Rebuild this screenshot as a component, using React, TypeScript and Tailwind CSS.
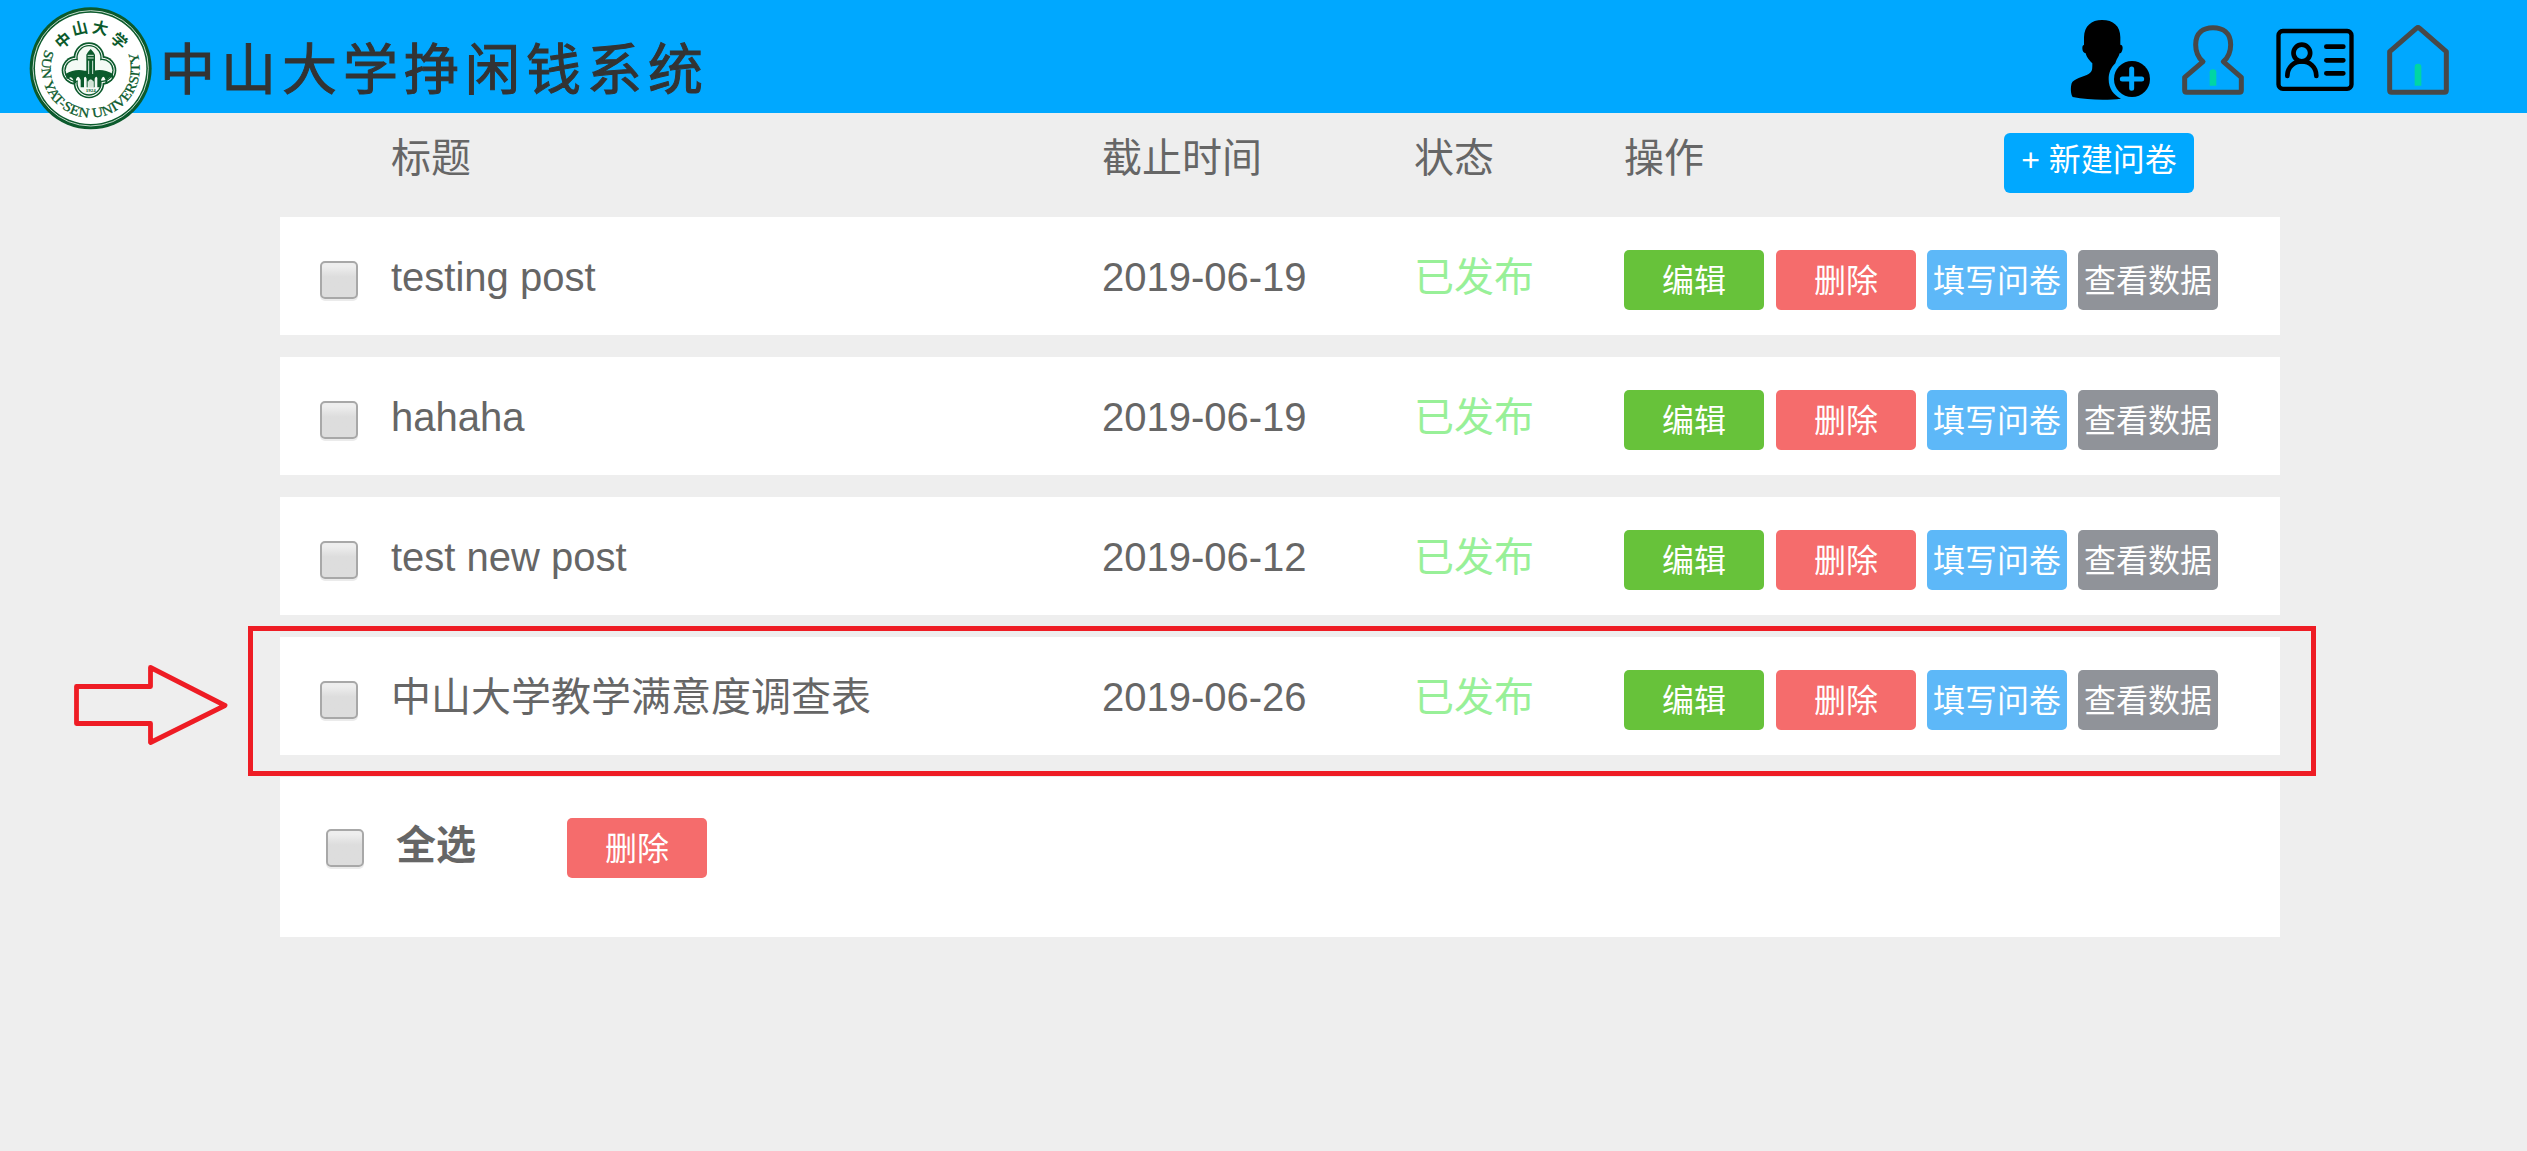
import React from "react";

type Post = { title: string; deadline: string };

const posts: Post[] = [
  { title: "testing post", deadline: "2019-06-19" },
  { title: "hahaha", deadline: "2019-06-19" },
  { title: "test new post", deadline: "2019-06-12" },
  { title: "中山大学教学满意度调查表", deadline: "2019-06-26" },
];

function Lobes({ r, fill }: { r: number; fill: string }) {
  return (
    <g fill={fill}>
      <circle cx="207" cy="173" r={r} />
      <circle cx="207" cy="249" r={r} />
      <circle cx="168" cy="211" r={r - 3} />
      <circle cx="246" cy="211" r={r - 3} />
      <circle cx="207" cy="211" r={r + 10} />
    </g>
  );
}

function Logo() {
  const green = "#0b5a2c";
  return (
    <svg viewBox="0 0 420 405" className="h-[135px] w-[140px] shrink-0">
      <circle cx="212" cy="205" r="183" fill={green} />
      <circle cx="212" cy="205" r="173" fill="none" stroke="#e8f3ea" strokeWidth="2.5" />
      <circle cx="212" cy="205" r="167" fill="#fff" />
      <path id="ring" d="M 77 148 A 147 147 0 1 0 354 167" fill="none" />
      <text fill={green} fontSize="41" fontWeight="400" stroke={green} strokeWidth="0.8" fontFamily="Liberation Serif, serif">
        <textPath href="#ring" textLength="572" lengthAdjust="spacingAndGlyphs">
          SUN YAT-SEN UNIVERSITY
        </textPath>
      </text>
      <g
        fill={green}
        fontSize="47"
        fontWeight="700"
        textAnchor="middle"
        fontFamily="KaiTi, 'Noto Sans CJK SC', sans-serif"
      >
        <text transform="translate(129 121) rotate(-40)" y="17">中</text>
        <text transform="translate(179 85) rotate(-14)" y="17">山</text>
        <text transform="translate(241 84) rotate(12)" y="17">大</text>
        <text transform="translate(297 122) rotate(42)" y="17">学</text>
      </g>
      <Lobes r={46} fill={green} />
      <Lobes r={41} fill="#fff" />
      <Lobes r={38} fill={green} />
      <Lobes r={34} fill="#f4faf5" />
      <path
        d="M136 222 Q165 205 194 212 H222 Q250 205 279 222 V236 Q268 226 262 240 V250 H256 V238 Q250 222 243 240 V262 H232 V234 Q228 226 224 236 V262 H200 V236 Q196 226 192 234 V262 H182 V240 Q174 222 168 238 V250 H160 V240 Q154 226 146 236 H140Z"
        fill={green}
      />
      <path d="M199 226 V164 L204 156 L212 147 L220 156 L225 164 V226Z" fill={green} />
      <path d="M203 166 H221 M203 174 H221" stroke="#d9ebdd" strokeWidth="3" />
      <path d="M206 182 V222 M218 182 V222" stroke="#d9ebdd" strokeWidth="3" />
      <path d="M204 262 V245 Q212 234 220 245 V262Z" stroke="#fff" strokeWidth="2" fill="#cfe3d4" />
      <text x="212" y="277" fontSize="15" fontWeight="700" textAnchor="middle" fill={green} fontFamily="Liberation Serif, serif">
        1924
      </text>
    </svg>
  );
}

function AddUserIcon() {
  return (
    <svg viewBox="60 57 243 246" className="h-[82px] w-[81px]">
      <path
        d="M156 60 C190 60 211 78 211 112 L211 134 C218 134 220 144 216 153 C214 159 211 160 209 160 C206 171 200 176 198 184 L196 190 C182 203 176 220 176 238 C176 264 190 286 213 296 C170 301 115 300 68 291 C62 284 61 262 65 250 C69 236 100 231 117 221 C127 215 127 208 127 190 C119 181 111 175 107 160 C101 160 97 153 97 145 C97 138 99 135 102 135 L102 112 C103 78 124 60 156 60Z"
        fill="#000"
      />
      <circle cx="246" cy="237" r="54" fill="#000" />
      <path d="M245 207 V265 M217 237 H275" stroke="#00a8ff" strokeWidth="15" strokeLinecap="round" />
    </svg>
  );
}

function UserIcon() {
  return (
    <svg viewBox="393 72 192 216" className="h-[72px] w-[64px]">
      <path
        d="M489 83 C460 83 437 98 437 134 C437 157 445 173 459 185 L404 232 V271 Q404 277 410 277 H568 Q574 277 574 271 V232 L520 185 C534 173 542 157 542 134 C542 98 518 83 489 83Z"
        fill="none"
        stroke="#484848"
        strokeWidth="15"
        strokeLinejoin="round"
      />
      <path d="M479 257 V217 Q479 208 489 208 Q499 208 499 217 V257Z" fill="#00d6a3" />
    </svg>
  );
}

function CardIcon() {
  return (
    <svg viewBox="675 84 240 192" className="h-[64px] w-[80px]">
      <g fill="none" stroke="#000" strokeWidth="13" strokeLinecap="round">
        <rect x="685.5" y="93" width="219" height="173.500" rx="13" />
        <circle cx="755.500" cy="159" r="25" strokeWidth="14" />
        <path d="M712 228 C712 200 733 184 755.500 184 C778 184 799 200 799 228" strokeWidth="14" />
        <path d="M829 140 H880 M829 181 H880 M829 220 H880" strokeWidth="14" />
      </g>
    </svg>
  );
}

function HomeIcon() {
  return (
    <svg viewBox="1008 72 192 216" className="h-[72px] w-[64px]">
      <path
        d="M1099 85 Q1104 81 1109 85 L1189 155 V271 Q1189 277 1183 277 H1025 Q1019 277 1019 271 V155Z"
        fill="none"
        stroke="#484848"
        strokeWidth="15"
        strokeLinejoin="round"
      />
      <path d="M1094 257 V200 Q1094 191 1104 191 Q1114 191 1114 200 V257Z" fill="#00d6a3" />
    </svg>
  );
}

function Checkbox() {
  return (
    <span
      role="checkbox"
      aria-checked={false}
      className="block size-[38px] shrink-0 rounded-[5px] border-2 border-[#a8a8a8] bg-linear-to-b from-[#eeeeee] from-10% to-[#dddddd] to-40% shadow-[0_2px_0_#ebebeb]"
    />
  );
}

function ActionButton({ color, children }: { color: string; children: React.ReactNode }) {
  return (
    <button
      className={`flex h-[60px] w-[140px] shrink-0 items-center justify-center rounded-[5px] pt-px text-[32px] leading-[60px] whitespace-nowrap text-white ${color}`}
    >
      {children}
    </button>
  );
}

function Row({ post }: { post: Post }) {
  return (
    <div className="grid h-[118px] grid-cols-[111px_711px_312px_210px_1fr] bg-white leading-[120px]">
      <div className="pt-[44px] pl-[40px]">
        <Checkbox />
      </div>
      <div>{post.title}</div>
      <div>{post.deadline}</div>
      <div className="text-[#98f098]">已发布</div>
      <div className="flex gap-[11px] pt-[33px]">
        <ActionButton color="mr-px bg-[#67c23a]">编辑</ActionButton>
        <ActionButton color="bg-[#f56c6c]">删除</ActionButton>
        <ActionButton color="bg-[#5db8f8]">填写问卷</ActionButton>
        <ActionButton color="bg-[#909399]">查看数据</ActionButton>
      </div>
    </div>
  );
}

export default function App() {
  return (
    <div className="relative min-h-[1151px] w-[2527px] overflow-hidden bg-[#eeeeee] font-['Liberation_Sans','Noto_Sans_CJK_SC',sans-serif] text-[40px] text-[#666666]">
      <header className="flex h-[113px] items-start bg-[#00a8ff] pr-[77px] pl-5">
        <Logo />
        <h1 className="mt-[17px] font-['KaiTi','STKaiti','Noto_Sans_CJK_SC',serif] text-[55px] leading-[96px] font-normal tracking-[6px] whitespace-nowrap text-[#333333] [-webkit-text-stroke:1px_#333333]">
          中山大学挣闲钱系统
        </h1>
        <nav className="mt-[19px] ml-auto flex h-[82px] items-center">
          <AddUserIcon />
          <div className="ml-[30px]">
            <UserIcon />
          </div>
          <div className="ml-[30px]">
            <CardIcon />
          </div>
          <div className="ml-[31px]">
            <HomeIcon />
          </div>
        </nav>
      </header>

      <main className="mx-[280px] w-[2000px]">
        <div className="grid h-[104px] grid-cols-[111px_711px_312px_210px_380px_190px] leading-[90px]">
          <div />
          <div>标题</div>
          <div>截止时间</div>
          <div>状态</div>
          <div>操作</div>
          <button className="mt-[20px] h-[60px] rounded-[6px] bg-[#00a8ff] pb-[6px] text-[32px] leading-[54px] whitespace-nowrap text-white">
            + 新建问卷
          </button>
        </div>

        <div className="flex flex-col gap-[22px]">
          {posts.map((post) => (
            <Row key={post.title} post={post} />
          ))}
          <div className="flex h-[160px] items-start bg-white pl-[46px]">
            <div className="pt-[52px]">
              <Checkbox />
            </div>
            <div className="ml-[32px] w-[171px] leading-[136px] font-bold">全选</div>
            <div className="pt-[41px]">
              <ActionButton color="bg-[#f56c6c]">删除</ActionButton>
            </div>
          </div>
        </div>
      </main>

      <div className="pointer-events-none absolute top-[626px] left-[248px] h-[150px] w-[2068px] border-[5px] border-[#ee1c24]" />
      <svg viewBox="70 660 162 90" className="absolute top-[660px] left-[70px] h-[90px] w-[162px]">
        <path
          d="M76.500 686.500 H150.500 V667.500 L225 705.500 L150.500 742.500 V723.500 H76.500Z"
          fill="none"
          stroke="#ee1c24"
          strokeWidth="4.800"
          strokeLinejoin="round"
        />
      </svg>
    </div>
  );
}
